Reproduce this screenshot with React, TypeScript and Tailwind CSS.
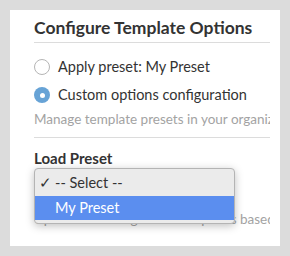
const font = { fontFamily: 'Lato, "Noto Sans", sans-serif' };

function Radio({ checked, label }: { checked?: boolean; label: string }) {
  return (
    <label className="flex items-center h-[28px] gap-[8px] text-[14.5px] text-[#333]">
      {checked ? (
        <span className="w-[16px] h-[16px] rounded-full bg-[#67a3d6] flex items-center justify-center shrink-0">
          <span className="w-[5px] h-[5px] rounded-full bg-white" />
        </span>
      ) : (
        <span className="w-[16px] h-[16px] rounded-full border border-[#b5b5b5] bg-white shrink-0" />
      )}
      <span className="whitespace-nowrap">{label}</span>
    </label>
  );
}

export default function App() {
  return (
    <div className="w-[290px] h-[256px] bg-[#dcdcdc] p-[10px]" style={font}>
      <div className="bg-white h-[236px] px-[24px] pt-[6px] overflow-hidden relative">
        <div className="w-[236px]">
          <h2 className="text-[17.5px] font-bold leading-[24px] text-[#333] pb-[2px] border-b border-[#dcdcdc] whitespace-nowrap">
            Configure Template Options
          </h2>
          <div className="pt-[10px]">
            <Radio label="Apply preset: My Preset" />
            <Radio checked label="Custom options configuration" />
          </div>
          <p className="text-[13.5px] leading-[18px] text-[#a3a3a3] whitespace-nowrap overflow-hidden mt-[1px] pb-[9px] border-b border-[#dcdcdc]">
            Manage template presets in your organization
          </p>
          <div className="text-[15px] font-bold leading-[20px] text-[#333] mt-[10px]">Load Preset</div>
          <div className="relative mt-[4px]">
            <div className="w-[200px] h-[26px] border border-[#c8c8c8] rounded-[4px] bg-white" />
            <p className="text-[13.5px] leading-[18px] text-[#a3a3a3] whitespace-nowrap overflow-hidden mt-[12px]">
              Update all settings from templates based on
            </p>
            <div className="absolute left-0 top-[-4px] w-[201px] rounded-[4px] border border-[#b4b4b4] bg-[#ebebeb] pb-[3px] shadow-[0_2px_8px_rgba(0,0,0,0.25)]">
              <div className="h-[27px] flex items-center pl-[4px] text-[14.5px] text-[#333]">
                <span className="w-[16px]">✓</span>
                <span>-- Select --</span>
              </div>
              <div className="h-[24px] flex items-center pl-[20px] text-[14.5px] text-white bg-[#5b8eef]">My Preset</div>
            </div>
          </div>
        </div>
      </div>
    </div>
  );
}
